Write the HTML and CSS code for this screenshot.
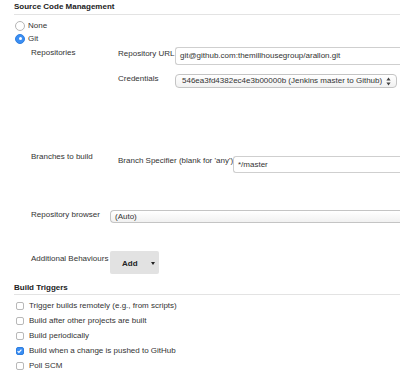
FILE: index.html
```html
<!DOCTYPE html>
<html>
<head>
<meta charset="utf-8">
<link rel="stylesheet" href="styles.css">
</head>
<body>
<div class="page">
  <div class="section-head">Source Code Management</div>
  <div class="radio-row first"><span class="radio"></span><span>None</span></div>
  <div class="radio-row"><span class="radio on"></span><span>Git</span></div>

  <div class="block repos">
    <div class="lbl">Repositories</div>
    <div class="sub">
      <div class="subrow">
        <div class="sublbl url-lbl">Repository URL</div>
        <div class="field text-field tall open">git@github.com:themillhousegroup/arallon.git</div>
      </div>
      <div class="subrow cred-row">
        <div class="sublbl">Credentials</div>
        <div class="field select cred">
          <span>546ea3fd4382ec4e3b00000b (Jenkins master to Github)</span>
          <svg class="arrows" width="5" height="9" viewBox="0 0 5 9"><path d="M2.5 0.5 L4.6 3.4 L0.4 3.4 Z M2.5 8.5 L4.6 5.6 L0.4 5.6 Z" fill="#444"/></svg>
        </div>
      </div>
    </div>
  </div>

  <div class="block branches">
    <div class="lbl">Branches to build</div>
    <div class="sub">
      <div class="subrow">
        <div class="sublbl branch-lbl">Branch Specifier (blank for 'any')</div>
        <div class="field text-field branch open">*/master</div>
      </div>
    </div>
  </div>

  <div class="block browser">
    <div class="lbl">Repository browser</div>
    <div class="field select wide open">(Auto)</div>
  </div>

  <div class="block behaviours">
    <div class="lbl add-lbl">Additional Behaviours</div>
    <div class="add-btn"><span>Add</span><span class="caret"></span></div>
  </div>

  <div class="section-head triggers">Build Triggers</div>
  <div class="check-row first"><span class="check"></span><span>Trigger builds remotely (e.g., from scripts)</span></div>
  <div class="check-row"><span class="check"></span><span>Build after other projects are built</span></div>
  <div class="check-row"><span class="check"></span><span>Build periodically</span></div>
  <div class="check-row"><span class="check on"><svg width="8" height="8" viewBox="0 0 8 8"><path d="M1.8 4.1 L3.3 5.6 L6.2 2.3" fill="none" stroke="#fff" stroke-width="1.3"/></svg></span><span>Build when a change is pushed to GitHub</span></div>
  <div class="check-row"><span class="check"></span><span>Poll SCM</span></div>
</div>
</body>
</html>
```

FILE: styles.css
```css
html, body {
  margin: 0;
  padding: 0;
  background: #fff;
  overflow: hidden;
}
body {
  width: 400px;
  height: 375px;
  font-family: "Liberation Sans", Arial, Helvetica, sans-serif;
  font-size: 8px;
  color: #333;
}
.page {
  padding: 2px 0 0 14px;
}
.section-head {
  font-weight: bold;
  color: #222;
  line-height: 10px;
  padding-bottom: 2px;
  border-bottom: 1px solid #e3e3e3;
}
.radio-row {
  display: flex;
  align-items: center;
  height: 13px;
  line-height: 10px;
}
.radio-row.first {
  margin-top: 4px;
}
.radio {
  box-sizing: border-box;
  width: 10px;
  height: 10px;
  border-radius: 50%;
  border: 1px solid #b5b5b5;
  background: #fff;
  margin: 0 3px 0 1px;
  position: relative;
}
.radio.on {
  background: #3b8ef3;
  border-color: #2f7fe0;
}
.radio.on::after {
  content: "";
  position: absolute;
  left: 2.5px;
  top: 2.5px;
  width: 3px;
  height: 3px;
  border-radius: 50%;
  background: #fff;
}
.block {
  display: flex;
  margin-left: 17px;
}
.lbl {
  width: 79px;
  flex: none;
  line-height: 10px;
  white-space: nowrap;
}
.repos {
  margin-top: 2px;
}
.repos .lbl {
  padding-top: 1px;
}
.sub {
  flex: 1;
  min-width: 0;
  margin-left: 8px;
}
.subrow {
  display: flex;
  align-items: flex-start;
}
.sublbl {
  flex: none;
  line-height: 10px;
  width: 57px;
  white-space: nowrap;
}
.url-lbl {
  padding-top: 2px;
}
.field {
  box-sizing: border-box;
  line-height: 10px;
  background: #fff;
  overflow: hidden;
}
.text-field {
  border: 1px solid #cfcfcf;
  border-radius: 3px;
  padding: 0 0 0 4px;
  display: flex;
  align-items: center;
  color: #333;
  white-space: nowrap;
}
.tall {
  height: 18px;
}
.cred-row {
  margin-top: 9px;
}
.select {
  height: 14px;
  border: 1px solid #c4c4c4;
  border-radius: 4px;
  background: linear-gradient(#ffffff, #f1f1f1);
  display: flex;
  align-items: center;
  padding-left: 6px;
  white-space: nowrap;
  color: #333;
}
.cred {
  width: 222px;
  justify-content: space-between;
  padding-right: 5px;
}
.arrows {
  flex: none;
}
.branches {
  margin-top: 64px;
}
.branch-lbl {
  width: 115px;
  padding-top: 4px;
}
.branch {
  margin-top: 4px;
  height: 17px;
}
.browser {
  margin-top: 37px;
}
.wide {
  height: 13px;
  border-radius: 4px;
  padding-left: 4px;
}
.open {
  flex: 1;
  min-width: 0;
  border-right: none;
  border-top-right-radius: 0;
  border-bottom-right-radius: 0;
}
.behaviours {
  margin-top: 28px;
}
.add-lbl {
  padding-top: 3px;
}
.add-btn {
  box-sizing: border-box;
  width: 49px;
  height: 23px;
  background: #e2e2e2;
  border-radius: 2px;
  display: flex;
  align-items: center;
  padding: 2px 0 0 12px;
  font-weight: bold;
  color: #222;
}
.caret {
  margin-left: 13px;
  width: 0;
  height: 0;
  border-left: 2.5px solid transparent;
  border-right: 2.5px solid transparent;
  border-top: 3px solid #222;
}
.triggers {
  margin-top: 9px;
  padding-bottom: 1px;
}
.check-row {
  display: flex;
  align-items: center;
  height: 15px;
  line-height: 10px;
}
.check-row.first {
  margin-top: 3px;
}
.check {
  box-sizing: border-box;
  width: 8px;
  height: 8px;
  border: 1px solid #b8b8b8;
  border-radius: 2px;
  background: #fff;
  margin: 0 5px 0 2px;
  display: flex;
}
.check.on {
  background: #3b8ef3;
  border-color: #2f7fe0;
}
.check.on svg {
  margin: -1px 0 0 -1px;
}
```
